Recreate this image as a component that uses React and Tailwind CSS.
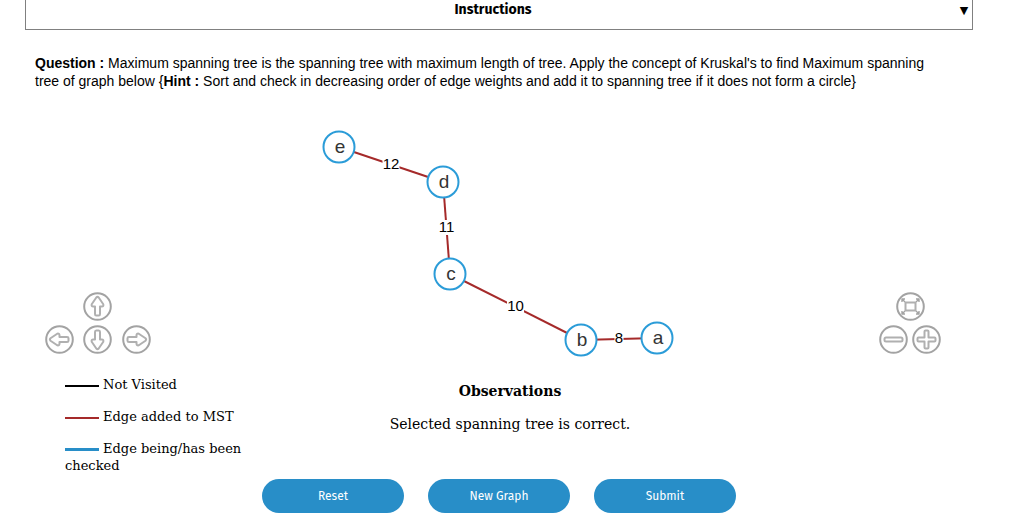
const nodes = [
  { id: 'e', x: 339, y: 147 },
  { id: 'd', x: 443, y: 182 },
  { id: 'c', x: 450, y: 274 },
  { id: 'b', x: 581, y: 340 },
  { id: 'a', x: 657, y: 338 },
];

const edges = [
  { from: nodes[0], to: nodes[1], weight: 12 },
  { from: nodes[1], to: nodes[2], weight: 11 },
  { from: nodes[2], to: nodes[3], weight: 10 },
  { from: nodes[3], to: nodes[4], weight: 8 },
];

const ARROW = 'M13.3 5.5 Q14.5 4.3 15.7 5.5 L20.3 12.2 Q20.8 14.5 18.8 14.5 H17 V22 Q17 23.5 15.8 23.5 H13.2 Q12 23.5 12 22 V14.5 H10.2 Q8.2 14.5 8.7 12.2 Z';

function RoundButton({ label, className = '', children }) {
  return (
    <button type="button" aria-label={label} className={`block size-[29px] ${className}`}>
      <svg viewBox="0 0 29 29" className="size-full" fill="none" stroke="#b0b0b0" strokeWidth="2" strokeLinejoin="round">
        <circle cx="14.5" cy="14.5" r="13.3" stroke="#a3a3a3" />
        {children}
      </svg>
    </button>
  );
}

function Arrow({ angle }) {
  return <path d={ARROW} transform={`rotate(${angle} 14.5 14.5)`} />;
}

function Graph() {
  return (
    <svg viewBox="299 110 400 260" className="h-[260px] w-[400px]" role="img" aria-label="Spanning tree">
      {edges.map(({ from, to, weight }) => {
        const x = (from.x + to.x) / 2;
        const y = (from.y + to.y) / 2;
        const w = weight > 9 ? 17 : 9;
        return (
          <g key={weight}>
            <line x1={from.x} y1={from.y} x2={to.x} y2={to.y} stroke="#a52a2a" strokeWidth="2" />
            <rect x={x - w / 2} y={y - 8} width={w} height="15" fill="#fff" />
            <text x={x} y={y + 4} textAnchor="middle" className="font-['Liberation_Sans',sans-serif] text-[15px]">{weight}</text>
          </g>
        );
      })}
      {nodes.map((n) => (
        <g key={n.id}>
          <circle cx={n.x} cy={n.y} r="15.5" fill="#fff" stroke="#2b9cd8" strokeWidth="2" />
          <text x={n.x + 1} y={n.y + 6} textAnchor="middle" fill="#343434" className="font-['Liberation_Sans',sans-serif] text-[19px]">{n.id}</text>
        </g>
      ))}
    </svg>
  );
}

function LegendItem({ line, children }) {
  return (
    <li>
      <span className={`mr-1 inline-block w-[34px] align-middle ${line}`} />
      {children}
    </li>
  );
}

function ActionButton({ children }) {
  return (
    <button type="button" className="h-[34px] w-[142px] rounded-full bg-[#288ec8] font-['Fira_Sans','Noto_Sans',sans-serif] text-xs text-white">
      {children}
    </button>
  );
}

export default function App() {
  return (
    <main className="bg-white pr-[39px] pl-[25px] text-black">
      <button type="button" className="flex h-[30px] w-full items-start border border-t-0 border-[#808080] font-['Fira_Sans','Noto_Sans',sans-serif] text-sm leading-5 font-bold">
        <span className="flex-1 pl-1 text-center">Instructions</span>
        <span className="w-4 text-center font-['DejaVu_Sans',sans-serif] text-[11px] leading-[22px] font-normal">▼</span>
      </button>

      <p className="mt-6 pr-6 pl-[10px] font-['Liberation_Sans',sans-serif] text-sm leading-[18px]">
        <b>Question :</b> Maximum spanning tree is the spanning tree with maximum length of tree. Apply the concept of Kruskal's to find Maximum spanning tree of graph below {'{'}
        <b>Hint :</b> Sort and check in decreasing order of edge weights and add it to spanning tree if it does not form a circle{'}'}
      </p>

      <section className="mt-5 grid grid-cols-[1fr_auto_1fr] items-end">
        <div className="mb-4 ml-5 grid w-[106px] grid-cols-3 justify-between gap-y-1">
          <RoundButton label="Move up" className="col-start-2 justify-self-center">
            <Arrow angle={0} />
          </RoundButton>
          <RoundButton label="Move left" className="col-start-1 row-start-2">
            <Arrow angle={-90} />
          </RoundButton>
          <RoundButton label="Move down" className="row-start-2 justify-self-center">
            <Arrow angle={180} />
          </RoundButton>
          <RoundButton label="Move right" className="row-start-2 justify-self-end">
            <Arrow angle={90} />
          </RoundButton>
        </div>
        <Graph />
        <div className="mr-8 mb-4 flex flex-col items-center gap-1 justify-self-end">
          <RoundButton label="Fit to view">
            <rect x="9.5" y="10.5" width="10" height="8" />
            <path stroke="#a3a3a3" strokeWidth="1.4" d="M9 10 L6 7 M6 10 V7 H9 M20 10 L23 7 M20 7 H23 V10 M9 19 L6 22 M6 19 V22 H9 M20 19 L23 22 M20 22 H23 V19" />
          </RoundButton>
          <div className="flex gap-1">
            <RoundButton label="Zoom out">
              <rect x="5.5" y="12.5" width="18" height="4" rx="1.5" />
            </RoundButton>
            <RoundButton label="Zoom in">
              <path d="M12.5 6.5 Q12.5 5.5 13.5 5.5 H15.5 Q16.5 5.5 16.5 6.5 V12.5 H22.5 Q23.5 12.5 23.5 13.5 V15.5 Q23.5 16.5 22.5 16.5 H16.5 V22.5 Q16.5 23.5 15.5 23.5 H13.5 Q12.5 23.5 12.5 22.5 V16.5 H6.5 Q5.5 16.5 5.5 15.5 V13.5 Q5.5 12.5 6.5 12.5 H12.5 Z" />
            </RoundButton>
          </div>
        </div>
      </section>

      <section className="mt-[6px] grid grid-cols-[1fr_2fr_1fr] font-['DejaVu_Serif',serif]">
        <ul className="flex flex-col gap-[15px] pl-10 text-[13px] leading-[17px]">
          <LegendItem line="h-[2px] bg-black">Not Visited</LegendItem>
          <LegendItem line="h-[2px] bg-[#a52a2a]">Edge added to MST</LegendItem>
          <LegendItem line="h-[3px] bg-[#288ec8]">Edge being/has been checked</LegendItem>
        </ul>
        <div className="pt-[6px] pl-[22px] text-center text-sm leading-[18px]">
          <h2 className="font-bold">Observations</h2>
          <p className="mt-[15px]">Selected spanning tree is correct.</p>
        </div>
      </section>

      <div className="mt-[5px] flex justify-center gap-6">
        <ActionButton>Reset</ActionButton>
        <ActionButton>New Graph</ActionButton>
        <ActionButton>Submit</ActionButton>
      </div>
    </main>
  );
}
